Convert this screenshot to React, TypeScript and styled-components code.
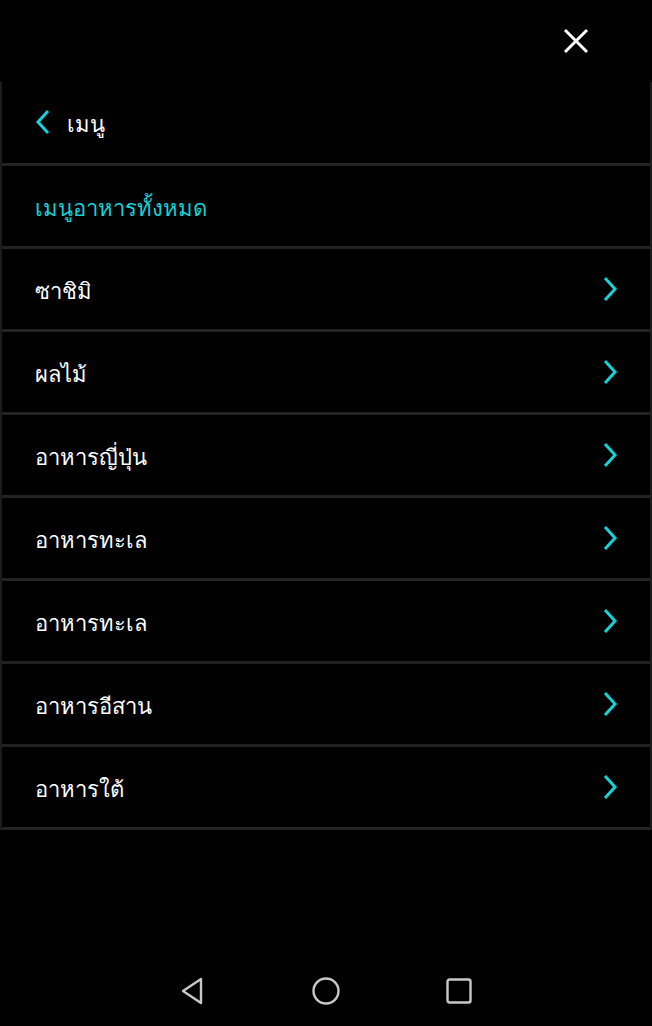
import React from 'react'
import styled, { createGlobalStyle } from 'styled-components'

const categories = [
  'ซาชิมิ',
  'ผลไม้',
  'อาหารญี่ปุ่น',
  'อาหารทะเล',
  'อาหารทะเล',
  'อาหารอีสาน',
  'อาหารใต้',
]

const Chevron = ({ dir }: { dir: 'left' | 'right' }) => (
  <svg width="16" height="26" viewBox="0 0 16 26">
    <path
      d={dir === 'right' ? 'M3 2 L13 13 L3 24' : 'M13 2 L3 13 L13 24'}
      fill="none"
      stroke="#14d2d8"
      strokeWidth="3"
    />
  </svg>
)

const App = () => {
  return (
    <Screen>
      <GlobalStyle />
      <TopBar>
        <CloseButton>
          <svg width="28" height="28" viewBox="0 0 28 28">
            <path d="M3 3 L25 25 M25 3 L3 25" stroke="#fff" strokeWidth="3" />
          </svg>
        </CloseButton>
      </TopBar>
      <Panel>
        <Row $header>
          <BackIcon>
            <Chevron dir="left" />
          </BackIcon>
          <Label>เมนู</Label>
        </Row>
        <Row>
          <Label $accent>เมนูอาหารทั้งหมด</Label>
        </Row>
        {categories.map((c, i) => (
          <Row key={i}>
            <Label>{c}</Label>
            <Chevron dir="right" />
          </Row>
        ))}
      </Panel>
      <Spacer />
      <NavBar>
        <svg width="30" height="30" viewBox="0 0 30 30">
          <path d="M23 3 L23 27 L5 15 Z" fill="none" stroke="#c8c8c8" strokeWidth="2.4" strokeLinejoin="round" />
        </svg>
        <svg width="30" height="30" viewBox="0 0 30 30">
          <circle cx="15" cy="15" r="12.5" fill="none" stroke="#c8c8c8" strokeWidth="2.4" />
        </svg>
        <svg width="30" height="30" viewBox="0 0 30 30">
          <rect x="3.5" y="3.5" width="23" height="23" rx="2" fill="none" stroke="#c8c8c8" strokeWidth="2.4" />
        </svg>
      </NavBar>
    </Screen>
  )
}

export default App

const GlobalStyle = createGlobalStyle`
html, body {
  margin: 0;
  padding: 0;
  background: #000;
}
body {
  font-family: "Noto Sans", "DejaVu Sans", sans-serif;
}
`

const Screen = styled.div`
width: 652px;
height: 1026px;
background: #000;
display: flex;
flex-direction: column;
overflow: hidden;
`

const TopBar = styled.div`
height: 82px;
display: flex;
justify-content: flex-end;
align-items: flex-start;
`

const CloseButton = styled.div`
width: 28px;
height: 28px;
margin: 27px 62px 0 0;
`

const Panel = styled.div`
border-left: 2px solid #1c1c1c;
border-right: 2px solid #1c1c1c;
display: flex;
flex-direction: column;
`

const Row = styled.div<{ $header?: boolean }>`
height: ${p => (p.$header ? '81px' : '80px')};
border-bottom: 3px solid #222;
display: flex;
align-items: center;
justify-content: ${p => (p.$header ? 'flex-start' : 'space-between')};
padding: 0 32px 0 33px;
`

const BackIcon = styled.div`
display: flex;
margin-right: 16px;
margin-top: -1px;
`

const Label = styled.span<{ $accent?: boolean }>`
font-size: 22px;
margin-top: 4px;
color: ${p => (p.$accent ? '#14d2d8' : '#fff')};
`

const Spacer = styled.div`
flex: 1;
`

const NavBar = styled.div`
height: 70px;
display: flex;
justify-content: center;
align-items: center;
gap: 103px;
`
